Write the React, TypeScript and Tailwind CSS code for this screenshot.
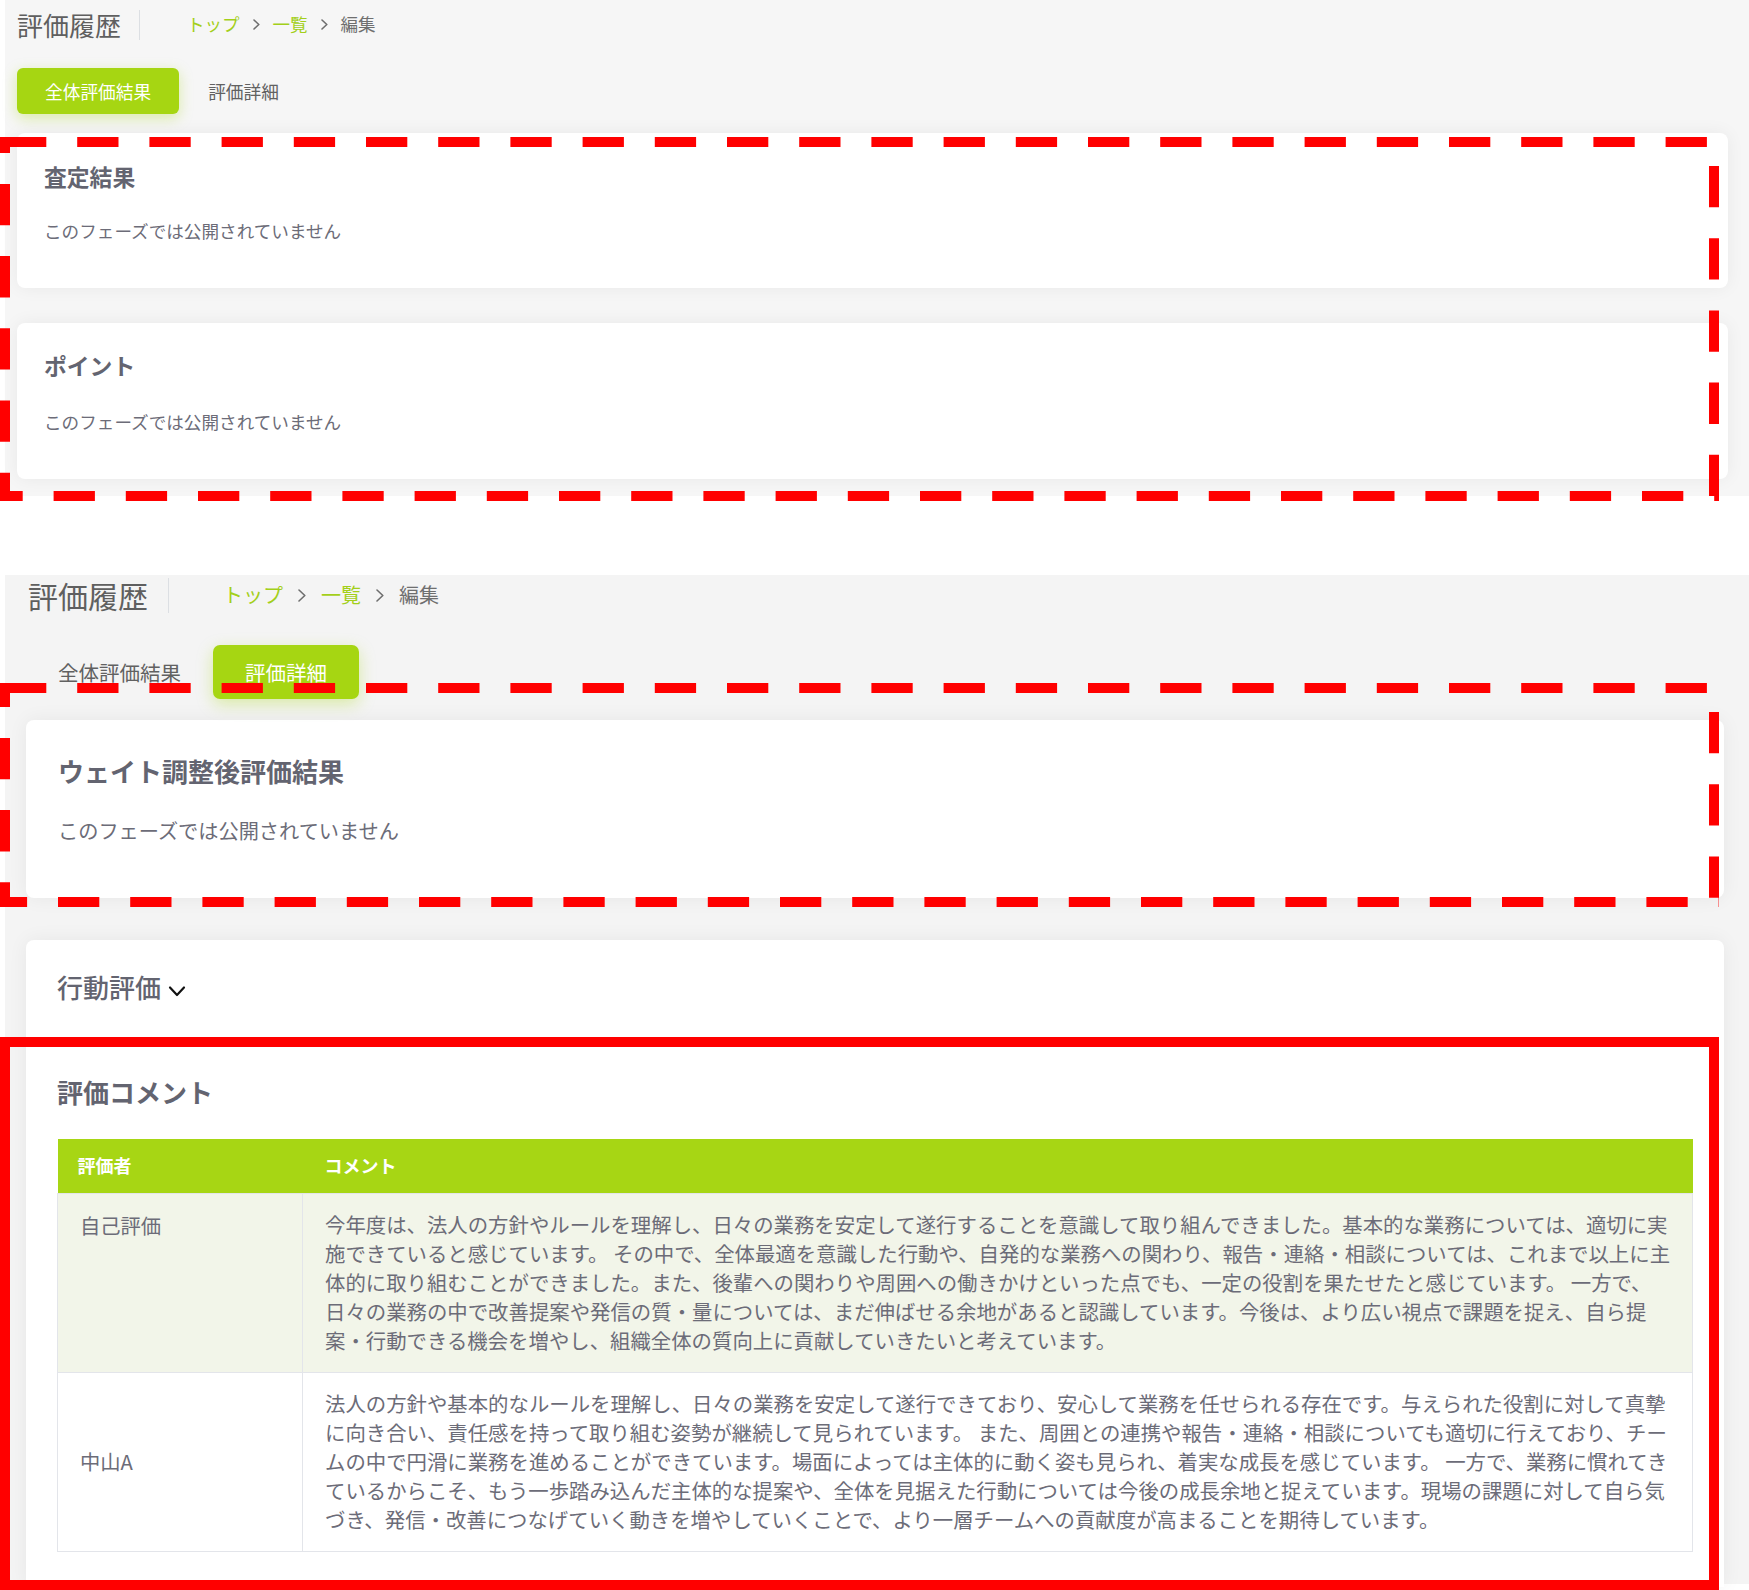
import React from "react";

const row1 = [
  "今年度は、法人の方針やルールを理解し、日々の業務を安定して遂行することを意識して取り組んできました。基本的な業務については、適切に実",
  "施できていると感じています。 その中で、全体最適を意識した行動や、自発的な業務への関わり、報告・連絡・相談については、これまで以上に主",
  "体的に取り組むことができました。また、後輩への関わりや周囲への働きかけといった点でも、一定の役割を果たせたと感じています。 一方で、",
  "日々の業務の中で改善提案や発信の質・量については、まだ伸ばせる余地があると認識しています。今後は、より広い視点で課題を捉え、自ら提",
  "案・行動できる機会を増やし、組織全体の質向上に貢献していきたいと考えています。",
];

const row2 = [
  "法人の方針や基本的なルールを理解し、日々の業務を安定して遂行できており、安心して業務を任せられる存在です。与えられた役割に対して真摯",
  "に向き合い、責任感を持って取り組む姿勢が継続して見られています。 また、周囲との連携や報告・連絡・相談についても適切に行えており、チー",
  "ムの中で円滑に業務を進めることができています。場面によっては主体的に動く姿も見られ、着実な成長を感じています。 一方で、業務に慣れてき",
  "ているからこそ、もう一歩踏み込んだ主体的な提案や、全体を見据えた行動については今後の成長余地と捉えています。現場の課題に対して自ら気",
  "づき、発信・改善につなげていく動きを増やしていくことで、より一層チームへの貢献度が高まることを期待しています。",
];

function Chev({ w, h }: { w: number; h: number }) {
  return (
    <svg width={w} height={h} viewBox={`0 0 ${w} ${h}`} fill="none">
      <path d={`M1 1 L${w - 1.2} ${h / 2} L1 ${h - 1}`} stroke="#6e6e6e" strokeWidth="1.6" strokeLinecap="round" strokeLinejoin="round" />
    </svg>
  );
}

function Breadcrumb({ size, gap, chevW, chevH }: { size: string; gap: string; chevW: number; chevH: number }) {
  return (
    <div className={`flex items-center ${gap} ${size}`}>
      <span className="text-[#a3cf1a]">トップ</span>
      <Chev w={chevW} h={chevH} />
      <span className="text-[#a3cf1a]">一覧</span>
      <Chev w={chevW} h={chevH} />
      <span className="text-[#6f6f6f]">編集</span>
    </div>
  );
}

const RED = "#ff0000";
const DASH = "41.3 30.9";

function Overlay() {
  return (
    <svg className="pointer-events-none absolute left-0 top-0" width="1749" height="1590" viewBox="0 0 1749 1590">
      {/* rect 1 */}
      <line x1="5" y1="142" x2="1719" y2="142" stroke={RED} strokeWidth="10" strokeDasharray={DASH} strokeDashoffset="0" />
      <line x1="1714" y1="137" x2="1714" y2="501" stroke={RED} strokeWidth="10" strokeDasharray={DASH} strokeDashoffset="43.2" />
      <line x1="0" y1="496" x2="1719" y2="496" stroke={RED} strokeWidth="10" strokeDasharray={DASH} strokeDashoffset="18.6" />
      <line x1="5" y1="137" x2="5" y2="501" stroke={RED} strokeWidth="10" strokeDasharray={DASH} strokeDashoffset="25.3" />
      {/* rect 2 */}
      <line x1="5" y1="688" x2="1719" y2="688" stroke={RED} strokeWidth="10" strokeDasharray={DASH} strokeDashoffset="0" />
      <line x1="1714" y1="683" x2="1714" y2="907" stroke={RED} strokeWidth="10" strokeDasharray={DASH} strokeDashoffset="43.2" />
      <line x1="0" y1="902" x2="1719" y2="902" stroke={RED} strokeWidth="10" strokeDasharray={DASH} strokeDashoffset="14.2" />
      <line x1="5" y1="683" x2="5" y2="907" stroke={RED} strokeWidth="10" strokeDasharray={DASH} strokeDashoffset="17.3" />
      {/* solid rect */}
      <rect x="5" y="1042" width="1709" height="543" fill="none" stroke={RED} strokeWidth="10" />
    </svg>
  );
}

export default function App() {
  return (
    <div className="relative h-[1590px] w-[1749px] overflow-hidden bg-white font-['Noto_Sans_CJK_JP','Noto_Sans',sans-serif]">
      {/* Section 1 */}
      <div className="ml-[5px] h-[496px] bg-[#f6f6f6] pl-[12px] pr-[21px]">
        <div className="flex h-[49px] items-center">
          <span className="text-[26px] leading-[36px] text-[#5f5f5f]">評価履歴</span>
          <div className="ml-[18px] h-[30px] w-px bg-[#dcdfe3]" />
          <div className="ml-[47px]">
            <Breadcrumb size="text-[17.5px]" gap="gap-[13px]" chevW={7} chevH={11} />
          </div>
        </div>
        <div className="mt-[19px] flex gap-[1px]">
          <div className="flex h-[46px] items-center rounded-[6px] bg-[#a6d612] px-[28px] text-[17.7px] text-white shadow-[0_4px_14px_rgba(166,214,18,0.35)]">
            全体評価結果
          </div>
          <div className="flex h-[46px] items-center px-[28px] text-[17.7px] text-[#616161]">評価詳細</div>
        </div>
        <div className="mt-[19px] h-[155px] rounded-[8px] bg-white pl-[27px] pt-[27px] shadow-[0_0_18px_rgba(0,0,0,0.06)]">
          <div className="text-[22.8px] font-bold leading-[33px] text-[#636470]">査定結果</div>
          <div className="mt-[25px] text-[17.6px] leading-[26px] text-[#6c6c78]">このフェーズでは公開されていません</div>
        </div>
        <div className="mt-[35px] h-[156px] rounded-[8px] bg-white pl-[27px] pt-[26px] shadow-[0_0_18px_rgba(0,0,0,0.06)]">
          <div className="text-[22.8px] font-bold leading-[33px] text-[#636470]">ポイント</div>
          <div className="mt-[27px] text-[17.6px] leading-[26px] text-[#6c6c78]">このフェーズでは公開されていません</div>
        </div>
      </div>

      {/* Section 2 */}
      <div className="ml-[5px] mt-[79px] h-[1009px] bg-[#f4f4f4] pl-[21px] pr-[25px]">
        <div className="flex h-[40px] items-center">
          <span className="ml-[2px] text-[30px] leading-[40px] text-[#5f5f5f]">評価履歴</span>
          <div className="ml-[20px] h-[35px] w-px bg-[#dcdfe3]" />
          <div className="ml-[54px]">
            <Breadcrumb size="text-[20px]" gap="gap-[15px]" chevW={8} chevH={13} />
          </div>
        </div>
        <div className="mt-[30px] flex">
          <div className="flex h-[54px] items-center px-[32px] text-[20.5px] text-[#616161]">全体評価結果</div>
          <div className="flex h-[54px] items-center rounded-[7px] bg-[#a6d612] px-[32px] text-[20.5px] text-white shadow-[0_5px_16px_rgba(166,214,18,0.35)]">
            評価詳細
          </div>
        </div>
        <div className="mt-[21px] h-[178px] rounded-[8px] bg-white pl-[32px] pt-[32px] shadow-[0_0_20px_rgba(0,0,0,0.06)]">
          <div className="text-[26px] font-bold leading-[38px] text-[#636470]">ウェイト調整後評価結果</div>
          <div className="mt-[26px] text-[20.2px] leading-[30px] text-[#6c6c78]">このフェーズでは公開されていません</div>
        </div>
        <div className="mt-[42px] rounded-t-[8px] bg-white px-[31px] pb-[35px] pt-[28px] shadow-[0_0_20px_rgba(0,0,0,0.06)]">
          <div className="flex items-center">
            <span className="text-[26px] font-medium leading-[38px] text-[#636470]">行動評価</span>
            <svg className="ml-[7px] mt-[9px]" width="18" height="13" viewBox="0 0 18 13" fill="none">
              <path d="M2 2.5 L9 10 L16 2.5" stroke="#111" strokeWidth="2.2" strokeLinecap="round" strokeLinejoin="round" />
            </svg>
          </div>
          <div className="mt-[67px] text-[26px] font-bold leading-[38px] text-[#636470]">評価コメント</div>
          <table className="mt-[28px] w-full table-fixed border-collapse">
            <colgroup>
              <col className="w-[245px]" />
              <col />
            </colgroup>
            <thead>
              <tr className="h-[54px] bg-[#a7d614]">
                <th className="pl-[20px] text-left text-[18px] font-bold text-white">評価者</th>
                <th className="pl-[22px] text-left text-[18px] font-bold text-white">コメント</th>
              </tr>
            </thead>
            <tbody className="text-[#6c6c78]">
              <tr className="bg-[#f2f5e9]">
                <td className="border border-[#e3e5ea] pl-[22px] pt-[17px] align-top text-[20.3px] leading-[29px]">自己評価</td>
                <td className="border border-[#e3e5ea] px-[22px] py-[16px] text-[20.4px] leading-[29.2px]">
                  {row1.map((l, i) => (
                    <div key={i} className="whitespace-nowrap">{l}</div>
                  ))}
                </td>
              </tr>
              <tr className="bg-white">
                <td className="border border-[#e3e5ea] pl-[22px] align-middle text-[20.3px] leading-[29px]">中山A</td>
                <td className="border border-[#e3e5ea] px-[22px] py-[16px] text-[20.4px] leading-[29.2px]">
                  {row2.map((l, i) => (
                    <div key={i} className="whitespace-nowrap">{l}</div>
                  ))}
                </td>
              </tr>
            </tbody>
          </table>
        </div>
      </div>

      <Overlay />
    </div>
  );
}
